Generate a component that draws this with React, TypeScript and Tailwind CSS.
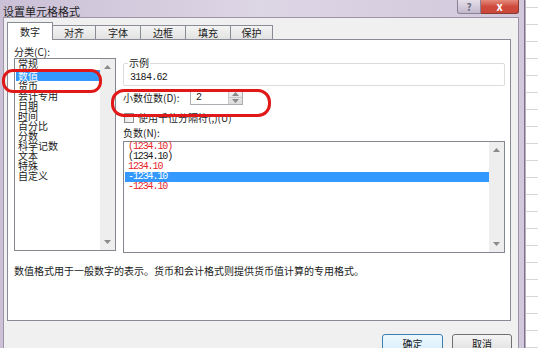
const categories = ["货币", "会计专用", "日期", "时间", "百分比", "分数", "科学记数", "文本", "特殊", "自定义"];

const negatives = [
  { text: "(1234.10)", red: true },
  { text: "(1234.10)", red: false },
  { text: "1234.10", red: true },
  { text: "-1234.10", red: false, selected: true },
  { text: "-1234.10", red: true },
];

function Arrow({ up, className }: { up?: boolean; className?: string }) {
  return (
    <svg width="7" height="4" viewBox="0 0 7 4" className={className}>
      {up ? <path d="M0 4 L3.5 0 L7 4 Z" fill="#8a8a8a" /> : <path d="M0 0 L3.5 4 L7 0 Z" fill="#8a8a8a" />}
    </svg>
  );
}

function ScrollBar() {
  return (
    <div className="flex w-[15px] flex-col items-center justify-between bg-[#eeeeee] py-[6px]">
      <Arrow up />
      <Arrow />
    </div>
  );
}

export default function App() {
  return (
    <div className="relative flex h-[348px] w-[538px] overflow-hidden bg-white font-['Noto_Sans_CJK_SC',sans-serif] text-[10px] text-[#1a1a1a]">
      {/* dialog window */}
      <div className="flex w-[525px] flex-col border-r border-[#7d7388] bg-gradient-to-r from-[#cbc0d6] via-[#ddd6e5] to-[#d2c8dc]">
        <div className="flex h-[22px] items-start">
          <span className="ml-[3px] mt-[5px] text-[11px] leading-[12px] text-[#222]">设置单元格格式</span>
          <div className="ml-auto mr-[5px] flex">
            <div className="flex h-[14px] w-[24px] items-center justify-center rounded-bl-[3px] border border-t-0 border-[#8c8298] bg-gradient-to-b from-[#e4dfe9] to-[#c3b9cd] text-[10px] font-bold leading-none text-[#6c6c7c]">
              ?
            </div>
            <div className="flex h-[14px] w-[38px] items-center justify-center rounded-br-[3px] border border-l-0 border-t-0 border-[#8a3a32] bg-gradient-to-b from-[#e48a7c] via-[#cf4a3c] to-[#c8483b] text-[11px] font-bold leading-none text-white">
              x
            </div>
          </div>
        </div>

        <div className="flex flex-1 pl-[3px] pr-[5px]">
          <div className="flex flex-1 flex-col border border-b-0 border-[#9d94a8] bg-[#f0f0f0] pl-[3px] pr-[7px]">
            {/* tabs */}
            <div className="mt-[4px] flex h-[17px] items-end">
              <div className="relative z-10 -mb-px flex h-[18px] w-[46px] items-center justify-center border border-b-0 border-[#898c95] bg-white leading-none">
                数字
              </div>
              {[
                ["对齐", "w-[44px]"],
                ["字体", "w-[46px]"],
                ["边框", "w-[46px]"],
                ["填充", "w-[46px]"],
                ["保护", "w-[43px]"],
              ].map(([t, w]) => (
                <div
                  key={t}
                  className={`-ml-px flex h-[14px] ${w} items-center justify-center border border-b-0 border-[#898c95] bg-gradient-to-b from-[#f4f4f4] to-[#e2e2e2] leading-none`}
                >
                  {t}
                </div>
              ))}
            </div>

            {/* tab panel */}
            <div className="flex h-[282px] flex-col border border-[#898c95] bg-white pl-[6px] pt-[6px]">
              <div className="flex">
                <div className="flex w-[102px] flex-col">
                  <div className="h-[12px] leading-[12px]">分类(C):</div>
                  <div className="flex h-[193px] overflow-hidden border border-[#828790]">
                    <div className="flex flex-1 flex-col pl-px">
                      <div className="-mt-px h-[12px] pl-[2px] leading-[12px]">常规</div>
                      <div className="h-[11px] bg-[#3399ff] pl-[2px] leading-[11px] text-white">数值</div>
                      {categories.map((c) => (
                        <div key={c} className="h-[10px] pl-[2px] text-[10px] leading-[10px]">
                          {c}
                        </div>
                      ))}
                    </div>
                    <ScrollBar />
                  </div>
                </div>

                <div className="ml-[7px] flex w-[382px] flex-col">
                  <div className="relative mt-[17px] h-[23px] rounded-[2px] border border-[#dcdcdc]">
                    <span className="absolute -top-[7px] left-[4px] bg-white px-px leading-[12px]">示例</span>
                    <div className="pl-[6px] pt-[9px] font-['Liberation_Mono',monospace] text-[10px] leading-[10px] tracking-[-0.7px]">
                      3184.62
                    </div>
                  </div>

                  <div className="mt-[4px] flex h-[15px] items-center">
                    <span className="w-[67px] leading-[12px]">小数位数(D):</span>
                    <div className="flex h-[15px] w-[53px] items-center border border-[#abadb3] bg-white">
                      <span className="flex-1 pl-[5px] font-['Liberation_Mono',monospace] text-[10px] leading-none">2</span>
                      <div className="flex h-full w-[14px] flex-col border-l border-[#c8c8c8] bg-gradient-to-b from-[#f2f2f2] to-[#dcdcdc]">
                        <div className="flex flex-1 items-center justify-center border-b border-[#c8c8c8]">
                          <Arrow up />
                        </div>
                        <div className="flex flex-1 items-center justify-center">
                          <Arrow />
                        </div>
                      </div>
                    </div>
                  </div>

                  <div className="mt-[7px] flex h-[11px] items-center">
                    <div className="ml-px h-[10px] w-[10px] border border-[#8f8f8f] bg-gradient-to-br from-[#dcdcdc] to-[#fafafa]" />
                    <span className="ml-[4px] leading-[11px]">使用千位分隔符(,)(U)</span>
                  </div>

                  <div className="mt-[4px] h-[12px] leading-[12px]">负数(N):</div>
                  <div className="mt-[2px] flex h-[112px] border border-[#828790]">
                    <div className="flex flex-1 flex-col font-['Liberation_Mono',monospace] text-[10px] tracking-[-1.1px]">
                      {negatives.map((n, i) => (
                        <div
                          key={i}
                          className={`ml-px h-[10px] pl-[3px] leading-[10px] ${
                            n.selected ? "bg-[#3399ff] text-white" : n.red ? "text-[#e5262b]" : "text-[#1a1a1a]"
                          }`}
                        >
                          {n.text}
                        </div>
                      ))}
                    </div>
                    <ScrollBar />
                  </div>
                </div>
              </div>

              <div className="mt-[12px] leading-[12px]">
                数值格式用于一般数字的表示。货币和会计格式则提供货币值计算的专用格式。
              </div>
            </div>

            {/* buttons */}
            <div className="mt-[13px] flex justify-end gap-[9px] -mr-px">
              <div className="flex h-[22px] w-[61px] justify-center rounded-[3px] border border-[#3c7fb1] bg-gradient-to-b from-[#edf7fd] to-[#d4edfb] pt-[3px] leading-[12px]">
                确定
              </div>
              <div className="flex h-[22px] w-[60px] justify-center rounded-[3px] border border-[#707070] bg-gradient-to-b from-[#f4f4f4] to-[#dcdcdc] pt-[3px] leading-[12px]">
                取消
              </div>
            </div>
          </div>
        </div>
      </div>

      {/* spreadsheet behind */}
      <div className="flex flex-1 flex-col border-l border-[#b8b0c2]">
        <div className="h-[13px] border-b border-[#d6d6d6]" />
        {Array.from({ length: 20 }).map((_, i) => (
          <div key={i} className="h-[17px] shrink-0 border-b border-[#d6d6d6]" />
        ))}
      </div>

      {/* red annotation rings */}
      <div className="pointer-events-none absolute left-[2px] top-[69px] h-[24px] w-[100px] rounded-[11px] border-[3px] border-[#e01818]" />
      <div className="pointer-events-none absolute left-[111px] top-[89px] h-[28px] w-[160px] rounded-[13px] border-[3px] border-[#e01818]" />
    </div>
  );
}
